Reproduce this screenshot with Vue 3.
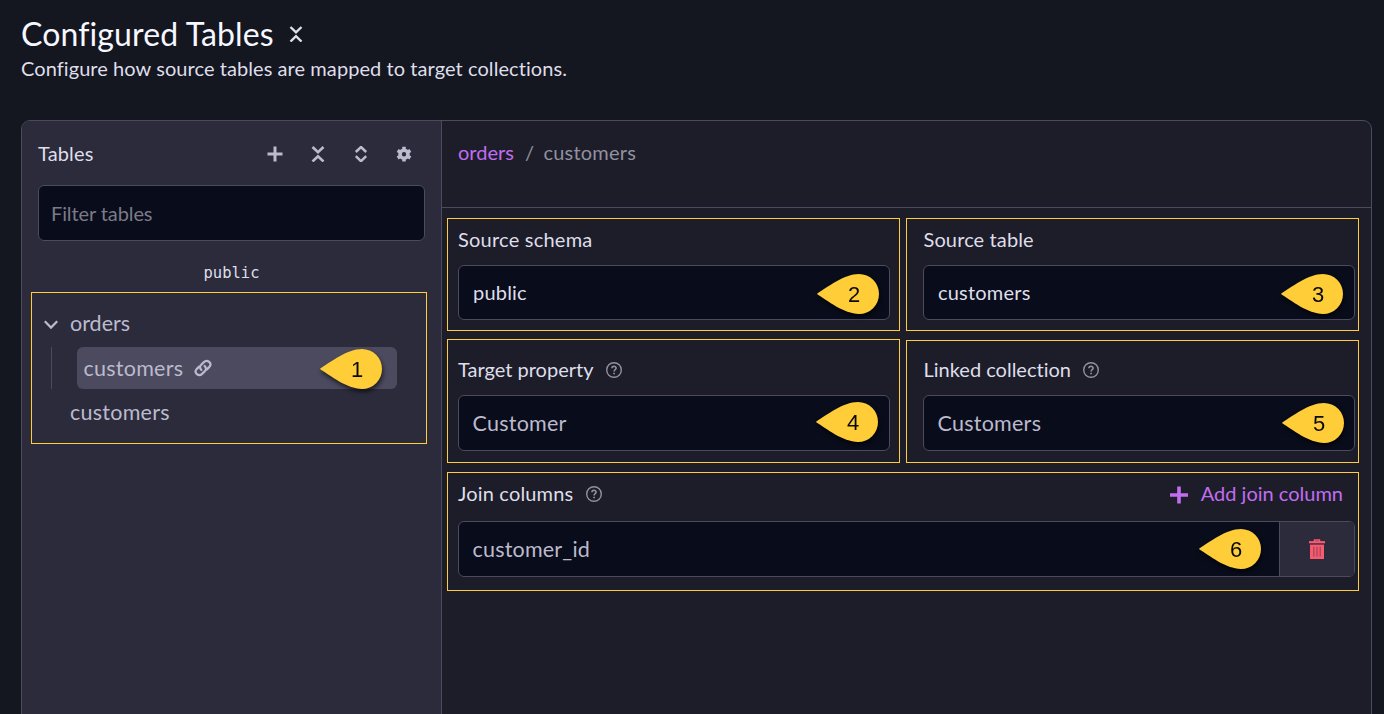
<script setup>
import { h } from 'vue'

const Marker = (props) =>
  h('span', { class: 'marker' }, [
    h('svg', { width: 62, height: 40, viewBox: '0 0 62 40' }, [
      h('path', {
        d: 'M0.7 20.6Q-0.5 20 0.7 19.3C10 13.5 27 0 42 0A20 20 0 0 1 42 40C27 40 10 26.5 0.7 20.6Z',
        fill: '#ffcd38',
      }),
    ]),
    h('b', props.n),
  ])
Marker.props = ['n']

const Help = () =>
  h('svg', { class: 'help', width: 16, height: 16, viewBox: '0 0 16 16', fill: 'none', stroke: '#92919f' }, [
    h('circle', { cx: 8, cy: 8, r: 7.3, 'stroke-width': 1.4 }),
    h('path', { d: 'M5.9 6.2C5.9 3.6 10.2 3.7 10.1 6.2C10 7.6 8.1 7.5 8.1 9.4', 'stroke-width': 1.6 }),
    h('path', { d: 'M8.1 10.7V12.3', 'stroke-width': 1.7 }),
  ])

const icons = {
  plus: 'M8 .5V15.5M.5 8H15.5',
  collapse: 'M2.5 1L8 6.3L13.5 1M2.5 15.5L8 10.2L13.5 15.5',
  expand: 'M2.8 6L8 1L13.2 6M2.8 10.2L8 15.2L13.2 10.2',
}
const Icon = (props) =>
  h('svg', { width: 16, height: 16, viewBox: '0 0 16 16', fill: 'none', stroke: 'currentColor', 'stroke-width': props.w || 2.4 }, [
    h('path', { d: icons[props.name] }),
  ])
Icon.props = ['name', 'w']
</script>

<template>
  <div class="page">
    <header class="head">
      <div class="title-row">
        <h1>Configured Tables</h1>
        <Icon name="collapse" class="title-icon" />
      </div>
      <p class="subtitle">Configure how source tables are mapped to target collections.</p>
    </header>

    <main class="panel">
      <aside class="sidebar">
        <div class="toolbar">
          <span class="t tables">Tables</span>
          <div class="tools">
            <Icon name="plus" w="3" />
            <Icon name="collapse" w="2.6" />
            <Icon name="expand" w="2.5" />
            <svg width="16" height="16" viewBox="0 0 16 16" fill="none" stroke="currentColor">
              <circle cx="8" cy="8.2" r="4" stroke-width="3.6" />
              <path d="M8 .8V3.2M8 13.2V15.6M1.6 4.5L3.7 5.7M12.3 10.7L14.4 11.9M1.6 11.9L3.7 10.7M12.3 5.7L14.4 4.5" stroke-width="3.6" />
            </svg>
          </div>
        </div>
        <div class="filter"><span class="t filter-text">Filter tables</span></div>
        <div class="schema">public</div>
        <div class="tree marked">
          <div class="node">
            <svg class="chev" width="14" height="10" viewBox="0 0 14 10" fill="none" stroke="currentColor" stroke-width="2.2"><path d="M.8 1.3L7 7.6L13.2 1.3" /></svg>
            <span class="t">orders</span>
          </div>
          <div class="branch">
            <div class="selected">
              <span class="t tree-customers">customers</span>
              <svg class="link" width="18" height="18" viewBox="0 0 18 18" fill="none" stroke="currentColor" stroke-width="2.2" stroke-linecap="round" stroke-linejoin="round">
                <path d="M7.4 11C5.6 9.4 5.7 7.3 7.2 5.8L9.9 3.1C13.4-.1 18.5 4.3 15.4 7.9L12.9 10.4" />
                <path d="M10.6 7C12.4 8.6 12.3 10.7 10.8 12.2L8.1 14.9C4.6 18.1-.5 13.7 2.6 10.1L5.1 7.6" />
              </svg>
              <Marker n="1" class="m1" />
            </div>
          </div>
          <div class="node last"><span class="t tree-customers">customers</span></div>
        </div>
      </aside>

      <section class="content">
        <nav class="crumbs">
          <span class="crumb-link">orders</span>
          <span class="slash">/</span>
          <span class="crumb-now">customers</span>
        </nav>
        <div class="form">
          <div class="field marked top">
            <div class="label"><span class="t source-schema">Source schema</span></div>
            <div class="input short"><span class="t">public</span><Marker n="2" class="m2" /></div>
          </div>
          <div class="field marked top right">
            <div class="label"><span class="t source-table">Source table</span></div>
            <div class="input short"><span class="t">customers</span><Marker n="3" class="m3" /></div>
          </div>
          <div class="field marked mid">
            <div class="label"><span class="t">Target property</span><Help /></div>
            <div class="input"><span class="t">Customer</span><Marker n="4" class="m4" /></div>
          </div>
          <div class="field marked mid right lower">
            <div class="label"><span class="t">Linked collection</span><Help /></div>
            <div class="input"><span class="t">Customers</span><Marker n="5" class="m5" /></div>
          </div>
          <div class="field marked join">
            <div class="label">
              <span class="t join-columns">Join columns</span><Help />
              <div class="add">
                <svg width="18" height="18" viewBox="0 0 18 18" fill="none" stroke="currentColor" stroke-width="3.6"><path d="M9 .5V17.5M0 9H18" /></svg>
                <span class="t">Add join column</span>
              </div>
            </div>
            <div class="input">
              <span class="t">customer_id</span><Marker n="6" class="m6" />
              <div class="trash">
                <svg width="16" height="20" viewBox="0 0 16 20" fill="none" stroke="#fa5a70">
                  <path d="M5.5 3V1H10.5V3" stroke-width="1.5" />
                  <path d="M0 3.2H16" stroke-width="2.2" />
                  <path d="M1 5.6H15V20H1Z" fill="#fa5a70" stroke="none" />
                  <path d="M4.8 7.7V17.5M8 7.7V17.5M11.2 7.7V17.5" stroke="#a7455a" stroke-width="1.3" />
                </svg>
              </div>
            </div>
          </div>
        </div>
      </section>
    </main>
  </div>
</template>

<style>
html, body { background: #141620; overflow: hidden; }
.marker { position: absolute; width: 62px; height: 40px; letter-spacing: 0; filter: drop-shadow(1px 3px 2px rgba(0, 0, 0, 0.6)); }
.marker svg { display: block; }
.marker b { position: absolute; left: 27px; top: 8px; width: 20px; text-align: center; font: 400 22px/25px "Liberation Sans", Arial, sans-serif; color: #090909; }
.help { flex: none; margin: -1px 0 0 12.5px; }
</style>

<style scoped>
.page { box-sizing: border-box; width: 1384px; height: 714px; overflow: hidden; background: #141620; font-family: Lato, sans-serif; font-size: 20px; color: #dfdeea; font-variant-ligatures: none; }
.t { white-space: nowrap; padding-bottom: 3px; }
.head { height: 120px; padding-left: 21px; box-sizing: border-box; }
.title-row { display: flex; height: 53px; padding-top: 14px; box-sizing: border-box; }
h1 { margin: 0; font-size: 32px; font-weight: 400; line-height: 40px; letter-spacing: 0.13px; color: #f7f7ff; width: 266.5px; white-space: nowrap; }
.title-icon { margin-top: 12px; color: #dfdeea; }
.subtitle { margin: 0; line-height: 30px; letter-spacing: 0.07px; white-space: nowrap; }
.panel { display: flex; box-sizing: border-box; width: 1351px; height: 620px; margin-left: 21px; border: 1px solid #4b4a5e; border-radius: 9px; overflow: hidden; background: #1c1d29; }
.sidebar { flex: none; border-right: 1px solid #4b4a5e; background: #2b2b3c; padding: 0 9px; box-sizing: content-box; width: 401px; }
.toolbar { display: flex; justify-content: space-between; align-items: center; height: 64px; padding: 2px 20.5px 0 7px; box-sizing: border-box; }
.tables { letter-spacing: 0.15px; padding-bottom: 2px; }
.tools { display: flex; gap: 27px; color: #bcbacd; }
.filter { display: flex; align-items: center; box-sizing: border-box; width: 387px; height: 56px; margin-left: 7px; padding: 2px 12px 0; border: 1px solid #4b4a5e; border-radius: 6px; background: #090c1b; color: #7b7a88; }
.filter-text { letter-spacing: -0.1px; padding-bottom: 2px; }
.schema { width: 401px; height: 51px; text-align: center; font: 15.5px/64px "DejaVu Sans Mono", monospace; color: #dfdeea; }
.marked { border: 1px solid #ffcd38; box-sizing: border-box; }
.tree { width: 396px; height: 152px; color: #bcbacd; font-size: 21.5px; }
.tree .t { padding-bottom: 1px; }
.tree-customers { letter-spacing: 0.25px; }
.node { display: flex; align-items: center; height: 54px; padding: 6px 0 0 12px; box-sizing: border-box; }
.chev { margin: 4px 12px 0 0; }
.last { height: 46px; padding: 0 0 0 38px; }
.branch { height: 42px; margin-left: 19px; border-left: 1px solid #4b4a5e; padding-left: 25px; }
.selected { position: relative; display: flex; align-items: center; width: 320px; height: 42px; padding-left: 6.5px; box-sizing: border-box; border-radius: 6px; background: #4b4a5e; }
.link { margin-left: 11px; }
.content { flex: 1; }
.crumbs { display: flex; height: 87px; box-sizing: border-box; padding: 18px 0 0 16px; line-height: 26px; border-bottom: 1px solid #4b4a5e; color: #92919f; }
.crumb-link { color: #c16df0; width: 67px; }
.slash { width: 18.5px; }
.crumb-now { letter-spacing: 0.2px; }
.form { display: grid; grid-template-columns: 453px 453px; column-gap: 6px; grid-template-rows: 113px 124px 119px; row-gap: 8px; padding: 10px 0 0 5px; }
.field { padding: 0 10px; }
.right { padding: 0 4px 0 16px; }
.right .label { padding-left: 0.5px; }
.join { grid-column: 1 / 3; margin-top: 1px; height: 119px; padding: 0 3px 0 10px; }
.top .label { height: 46px; padding-bottom: 4px; }
.mid .label { height: 55px; padding-top: 6px; }
.lower { margin-top: 1px; }
.lower .label { height: 54px; padding-top: 5px; }
.join .label { height: 48px; padding-bottom: 5px; }
.source-schema { letter-spacing: 0.23px; }
.source-table { letter-spacing: 0.12px; }
.join-columns { letter-spacing: 0.17px; }
.label { display: flex; align-items: center; box-sizing: border-box; }
.add { display: flex; align-items: center; gap: 13px; margin-left: auto; margin-right: 12px; color: #c16df0; }
.input { position: relative; display: flex; align-items: center; box-sizing: border-box; width: 432px; height: 56px; padding: 2px 0 0 13px; border: 1px solid #4b4a5e; border-radius: 6px; background: #090c1b; }
.short { height: 55px; padding-left: 14px; letter-spacing: 0.2px; }
.mid .input, .join .input { padding-left: 13.5px; color: #bcbacd; font-size: 21.5px; letter-spacing: 0.25px; }
.join .input { width: 897px; letter-spacing: 0.2px; }
.trash { display: flex; align-items: center; justify-content: center; align-self: stretch; width: 75px; margin: -2px 0 0 auto; background: #2b2b3c; border-left: 1px solid #4b4a5e; border-radius: 0 5px 5px 0; box-sizing: border-box; }
.m1 { left: 243px; top: 2px; }
.m2 { left: 358px; top: 8px; }
.m3 { left: 357px; top: 8px; }
.m4 { left: 357px; top: 6px; }
.m5 { left: 358px; top: 7px; }
.m6 { left: 740px; top: 7px; }
</style>
